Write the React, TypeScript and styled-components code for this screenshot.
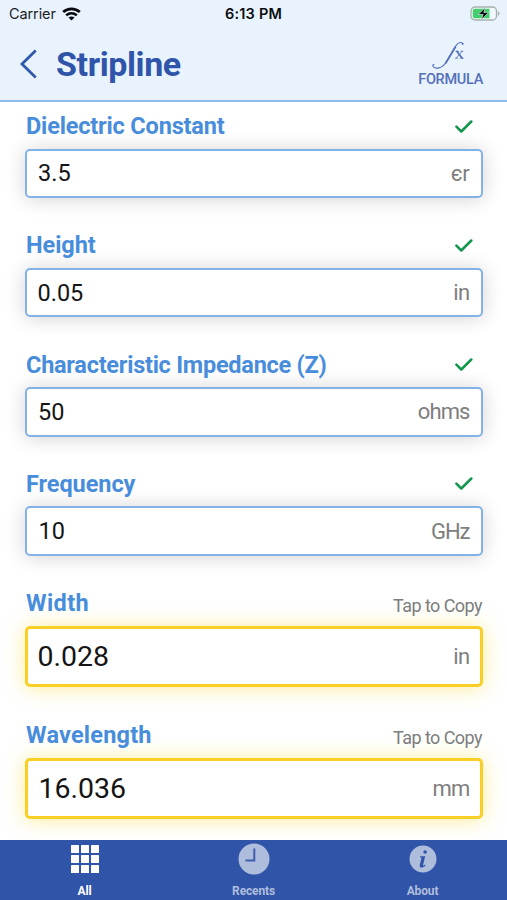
import React from "react";
import styled, { createGlobalStyle } from "styled-components";

const Global = createGlobalStyle`
  * { box-sizing: border-box; }
  body { margin: 0; background: #fff; font-family: Roboto, "Noto Sans", sans-serif; }
  button { border: 0; padding: 0; background: none; font: inherit; color: inherit; }
`;

const Screen = styled.div`
  width: 507px;
  height: 900px;
  display: flex;
  flex-direction: column;
  overflow: hidden;
  background: #fff;
`;

const Header = styled.header`
  flex: none;
  height: 102px;
  background: #e8f3fe;
  border-bottom: 2px solid #8fbae9;
`;

const StatusBar = styled.div`
  height: 28px;
  display: grid;
  grid-template-columns: 1fr auto 1fr;
  align-items: center;
  padding: 0 7px 0 9px;
  font: 400 14.5px/28px Inter, sans-serif;
  color: #1c2126;
`;

const Carrier = styled.div`
  display: flex;
  align-items: center;
  gap: 6px;
  letter-spacing: -0.1px;
`;

const Clock = styled.div`
  font-weight: 600;
  font-size: 14.5px;
  letter-spacing: 0.2px;
  margin-right: 2px;
  color: #0b0d10;
`;

const BatteryWrap = styled.div`
  display: flex;
  justify-content: flex-end;
`;

const NavBar = styled.div`
  height: 72px;
  display: flex;
  align-items: center;
  padding: 0 24px 0 20px;
`;

const BackButton = styled.button`
  display: flex;
  width: 36px;
`;

const Title = styled.h1`
  margin: 0;
  flex: 1;
  font-size: 34px;
  line-height: 40px;
  font-weight: 700;
  letter-spacing: -0.4px;
  color: #2f54a9;
`;

const FormulaButton = styled.button`
  display: flex;
  flex-direction: column;
  align-items: center;
  padding-top: 2px;
  color: #5670b9;
`;

const FormulaMark = styled.span`
  display: flex;
  height: 30px;
  margin-right: 5px;
`;

const FormulaLabel = styled.span`
  font-size: 14.5px;
  line-height: 18px;
  font-weight: 500;
  letter-spacing: -0.3px;
`;

const Form = styled.main`
  flex: 1;
  min-height: 0;
  padding: 10px 24.5px 0 25px;
`;

const Field = styled.section<{ $output?: boolean }>`
  height: ${(p) => (p.$output ? 131.5 : 119.25)}px;
`;

const FieldHead = styled.div<{ $output?: boolean }>`
  height: ${(p) => (p.$output ? 37 : 36.5)}px;
  display: flex;
  justify-content: space-between;
  padding-left: 1px;
`;

const Label = styled.label<{ $spacing: number }>`
  font-size: 23.5px;
  line-height: 28px;
  font-weight: 700;
  letter-spacing: ${(p) => p.$spacing}px;
  color: #488ddc;
  white-space: nowrap;
`;

const CheckSlot = styled.span`
  padding: 6.5px 9.5px 0 0;
`;

const CopyHint = styled.span`
  padding-top: 2px;
  font-size: 18px;
  line-height: 29px;
  letter-spacing: -0.55px;
  margin-right: 0.5px;
  color: #7d7d7d;
`;

const Box = styled.div<{ $output?: boolean }>`
  height: ${(p) => (p.$output ? 61 : 49.5)}px;
  display: flex;
  align-items: center;
  justify-content: space-between;
  border-radius: 5px;
  background: #fff;
  border: ${(p) => (p.$output ? "3px solid #f9cf25" : "2px solid #82b2e8")};
  padding: ${(p) => (p.$output ? "0 10px 0 9.5px" : "0 11px 0 10.5px")};
  box-shadow: ${(p) =>
    p.$output ? "0 1px 20px rgba(250, 220, 50, 0.5)" : "0 1px 20px rgba(0, 0, 0, 0.18)"};
`;

const Value = styled.span<{ $output?: boolean; $indent?: number }>`
  font-size: ${(p) => (p.$output ? 28.5 : 23.5)}px;
  padding-left: ${(p) => p.$indent ?? 0}px;
  color: #151515;
`;

const Unit = styled.span<{ $spacing?: number }>`
  font-size: 22px;
  letter-spacing: ${(p) => p.$spacing ?? 0}px;
  color: #7e7e7e;
`;

const TabBar = styled.nav`
  flex: none;
  height: 60px;
  display: grid;
  grid-template-columns: repeat(3, 1fr);
  background: #2f54a8;
`;

const Tab = styled.button<{ $active?: boolean }>`
  display: flex;
  flex-direction: column;
  align-items: center;
  justify-content: flex-start;
  padding-top: 3px;
  color: ${(p) => (p.$active ? "#fff" : "#afbddd")};
`;

const TabIcon = styled.span`
  height: 32px;
  display: flex;
  align-items: center;
`;

const TabLabel = styled.span`
  margin-top: 8px;
  font-size: 12px;
  line-height: 16px;
  font-weight: 700;
  letter-spacing: -0.15px;
`;

const inputs = [
  { label: "Dielectric Constant", value: "3.5", unit: "єr", spacing: -0.17, unitSpacing: -0.3, indent: 0.5 },
  { label: "Height", value: "0.05", unit: "in", spacing: -0.05, unitSpacing: -0.6, indent: 0 },
  { label: "Characteristic Impedance (Z)", value: "50", unit: "ohms", spacing: -0.25, unitSpacing: -0.9, indent: 0.5 },
  { label: "Frequency", value: "10", unit: "GHz", spacing: -0.08, unitSpacing: -1, indent: 1 },
];

const outputs = [
  { label: "Width", value: "0.028", unit: "in", spacing: 0.4, unitSpacing: -0.6, indent: 0 },
  { label: "Wavelength", value: "16.036", unit: "mm", spacing: 0.2, unitSpacing: -0.8, indent: 1 },
];

const Wifi = () => (
  <svg width="19" height="14" viewBox="0 0 19 14" fill="none" stroke="#080a0c">
    <path d="M1.2 5.1C5.8.7 13.2.7 17.8 5.1" strokeWidth="2.7" />
    <path d="M4.2 8.3c3-2.8 7.6-2.8 10.6 0" strokeWidth="2.5" />
    <path d="M9.5 13.6 6.5 10.6c1.7-1.5 4.3-1.5 6 0z" fill="#080a0c" stroke="none" />
  </svg>
);

const Battery = () => (
  <svg width="30" height="16" viewBox="0 0 30 16">
    <rect x="1" y="1" width="25.5" height="13" rx="4" fill="#f1f8fb" stroke="#a6b2ae" strokeWidth="1.3" />
    <path d="M4.8 2.8h14.7v9.4H4.8A2 2 0 0 1 2.8 10.2V4.8a2 2 0 0 1 2-2z" fill="#41cf6c" />
    <path d="M27.8 5.2c2.3 1 2.3 3.7 0 4.7z" fill="#a6b2ae" />
    <path d="M15.3 1.6 8.2 8.5H13L11.500 13.400l7.200-7H13.800z" fill="#080a0c" stroke="#e8f3fe" strokeWidth=".6" />
  </svg>
);

const Check = () => (
  <svg width="18" height="14" viewBox="0 0 18 14" fill="none">
    <path d="M1.4 6.7 6.3 11.5 16.3 1.5" stroke="#12964d" strokeWidth="2.5" strokeLinecap="round" strokeLinejoin="round" />
  </svg>
);

const FormulaIcon = () => (
  <svg width="34" height="29" viewBox="0 0 34 29" fill="none" stroke="currentColor" strokeLinecap="round">
    <path d="M32 3C31 .9 27.800.7 25 4.600 21.500 9.500 19 16 15 21.500 11 27.500 4.500 28.500 2 25.300c-.6-1 .1-1.800.9-1.700" strokeWidth="1.100" />
    <path d="M24.400 6 14.700 22" strokeWidth="1.800" />
    <circle cx="31.400" cy="2.800" r=".5" fill="currentColor" />
    <path d="M26 10.500 31 17" strokeWidth="1.800" />
    <path d="M31 10.500 25.300 17M24.900 10.300h2.700M29.800 10.300H32M24.500 17.200h2.200M29.300 17.200h3" strokeWidth=".8" />
  </svg>
);

const Grid = () => (
  <svg width="28" height="28" viewBox="0 0 28 28" fill="currentColor">
    {[0, 10, 20].map((y) =>
      [0, 10, 20].map((x) => <rect key={`${x}-${y}`} x={x} y={y} width="8" height="8" rx=".5" />)
    )}
  </svg>
);

const ClockIcon = () => (
  <svg width="32" height="32" viewBox="0 0 32 32" fill="none">
    <circle cx="16" cy="16" r="15.5" fill="#afbddd" />
    <path d="M16.300 5.500v12H7.500" stroke="#3d5fae" strokeWidth="2" />
  </svg>
);

const Info = () => (
  <svg width="28" height="28" viewBox="0 0 28 28">
    <circle cx="14" cy="14" r="13.5" fill="#afbddd" />
    <circle cx="16.1" cy="7" r="1.8" fill="#2f54a8" />
    <path d="M11 11.200h5.200l-2.200 8.800c-.2 1 .8.500 1.900-.4l.6.800c-3.100 3.100-6.500 2.600-5.700-.5l1.800-7.300H11z" fill="#2f54a8" />
  </svg>
);

export default function App() {
  return (
    <>
      <Global />
      <Screen>
        <Header>
          <StatusBar>
            <Carrier>Carrier <Wifi /></Carrier>
            <Clock>6:13 PM</Clock>
            <BatteryWrap><Battery /></BatteryWrap>
          </StatusBar>
          <NavBar>
            <BackButton aria-label="Back">
              <svg width="18" height="30" viewBox="0 0 18 30" fill="none">
                <path d="M15.7 1.5 2 15l13.700 13.500" stroke="#3158ad" strokeWidth="2.8" />
              </svg>
            </BackButton>
            <Title>Stripline</Title>
            <FormulaButton>
              <FormulaMark><FormulaIcon /></FormulaMark>
              <FormulaLabel>FORMULA</FormulaLabel>
            </FormulaButton>
          </NavBar>
        </Header>
        <Form>
          {inputs.map((f) => (
            <Field key={f.label}>
              <FieldHead>
                <Label $spacing={f.spacing}>{f.label}</Label>
                <CheckSlot><Check /></CheckSlot>
              </FieldHead>
              <Box>
                <Value $indent={f.indent}>{f.value}</Value>
                <Unit $spacing={f.unitSpacing}>{f.unit}</Unit>
              </Box>
            </Field>
          ))}
          {outputs.map((f) => (
            <Field key={f.label} $output>
              <FieldHead $output>
                <Label $spacing={f.spacing}>{f.label}</Label>
                <CopyHint>Tap to Copy</CopyHint>
              </FieldHead>
              <Box $output>
                <Value $output $indent={f.indent}>{f.value}</Value>
                <Unit $spacing={f.unitSpacing}>{f.unit}</Unit>
              </Box>
            </Field>
          ))}
        </Form>
        <TabBar>
          <Tab $active>
            <TabIcon><Grid /></TabIcon>
            <TabLabel>All</TabLabel>
          </Tab>
          <Tab>
            <TabIcon><ClockIcon /></TabIcon>
            <TabLabel>Recents</TabLabel>
          </Tab>
          <Tab>
            <TabIcon><Info /></TabIcon>
            <TabLabel>About</TabLabel>
          </Tab>
        </TabBar>
      </Screen>
    </>
  );
}
